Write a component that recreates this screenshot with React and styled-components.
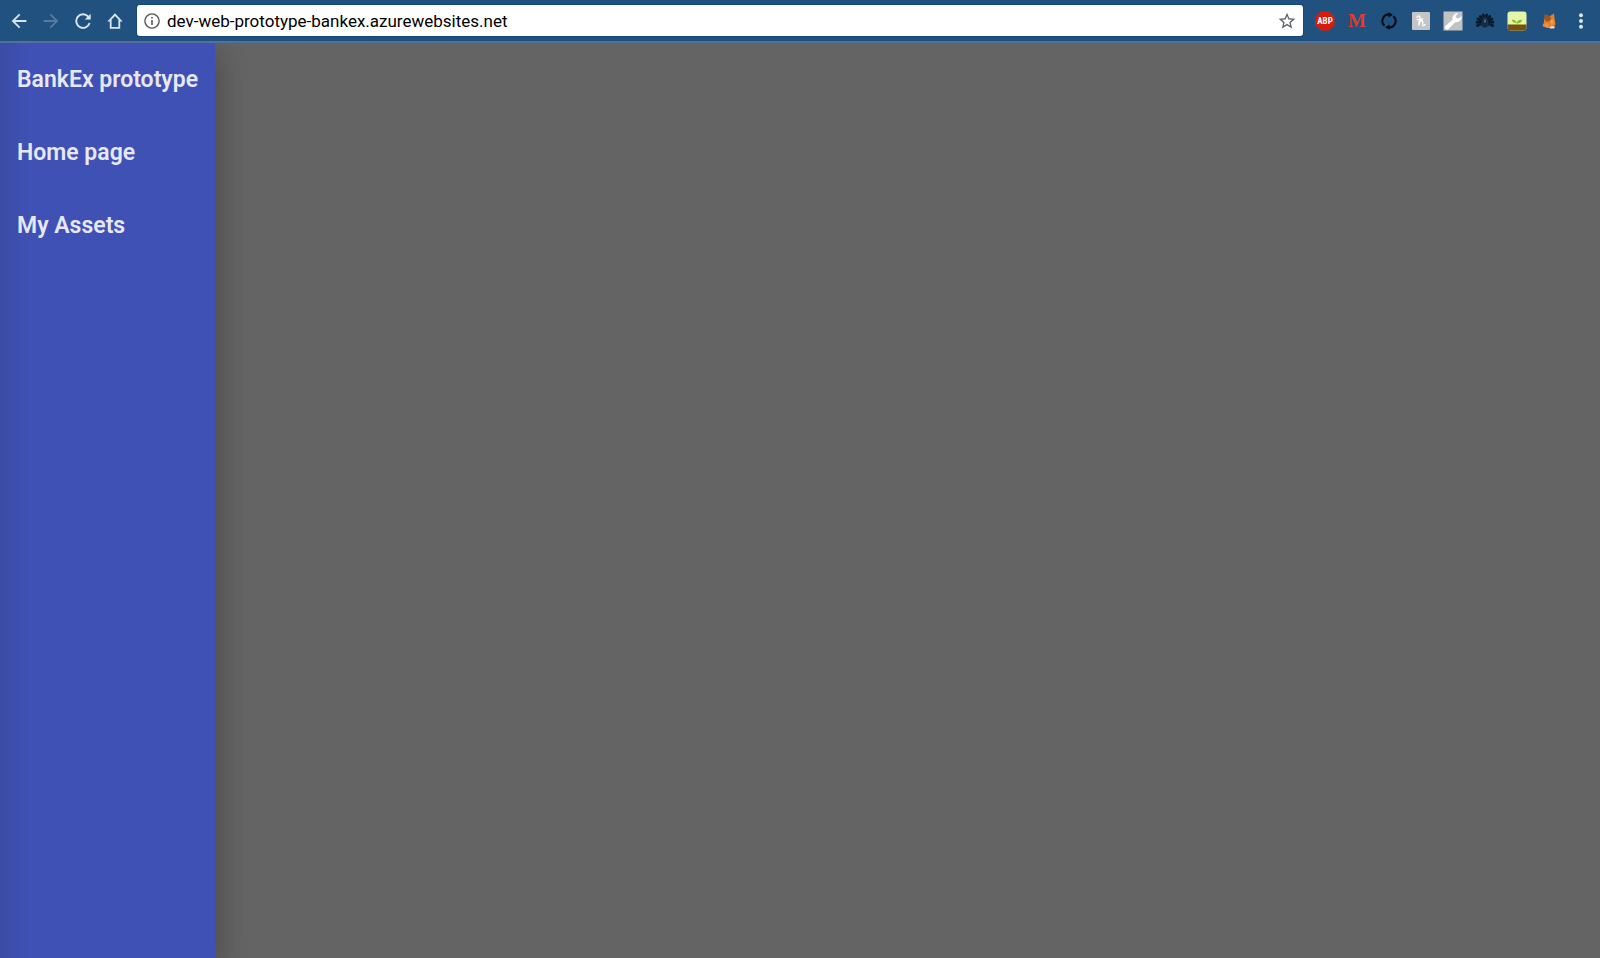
import React, { useState } from "react";
import styled, { createGlobalStyle } from "styled-components";

const GlobalStyle = createGlobalStyle`
  * {
    box-sizing: border-box;
  }
  body {
    margin: 0;
    background-color: #646464;
    font-family: Roboto, "Liberation Sans", sans-serif;
  }
`;

const Page = styled.div`
  display: flex;
  flex-direction: column;
  min-height: 100vh;
`;

const Toolbar = styled.header`
  display: flex;
  align-items: center;
  height: 43px;
  padding: 0 3px;
  background-color: #21527f;
  border-bottom: 2px solid #52709a;
  z-index: 1;
`;

const IconButton = styled.button`
  display: flex;
  align-items: center;
  justify-content: center;
  width: 32px;
  height: 32px;
  padding: 0;
  border: 0;
  background: none;
  color: ${({ disabled }) => (disabled ? "#557ca0" : "#dbe5ee")};
`;

const AddressBar = styled.div`
  display: flex;
  flex: 1;
  align-items: center;
  gap: 7px;
  height: 31px;
  margin: 0 6px;
  padding: 0 0 0 7px;
  border-radius: 3px;
  background-color: #fff;
  box-shadow: 0 0 0 1px #17477a;
`;

const AddressInput = styled.input`
  flex: 1;
  min-width: 0;
  padding: 0;
  border: 0;
  outline: 0;
  background: none;
  color: #000;
  font-family: Roboto, "Liberation Sans", sans-serif;
  font-size: 17px;
`;

const Extensions = styled.div`
  display: flex;
`;

const Content = styled.div`
  display: flex;
  flex: 1;
`;

const Drawer = styled.nav`
  display: flex;
  flex-direction: column;
  padding: 0 17px;
  background: linear-gradient(to right, #3c4ba6, #3f51b5 30px);
  box-shadow: 0 16px 24px 2px rgba(0, 0, 0, 0.14),
    0 6px 30px 5px rgba(0, 0, 0, 0.12);
`;

const DrawerLink = styled.a`
  color: #e6e8f6;
  font-size: 23px;
  font-weight: 600;
  line-height: 73px;
  text-decoration: none;
  white-space: nowrap;
`;

const Main = styled.main`
  flex: 1;
`;

const BackIcon = () => (
  <svg width="22" height="22" viewBox="0 0 24 24" fill="currentColor">
    <path d="M20 11H7.83l5.59-5.59L12 4l-8 8 8 8 1.41-1.41L7.83 13H20v-2z" />
  </svg>
);

const ForwardIcon = () => (
  <svg width="22" height="22" viewBox="0 0 24 24" fill="currentColor">
    <path d="M12 4l-1.41 1.41L16.17 11H4v2h12.17l-5.58 5.59L12 20l8-8z" />
  </svg>
);

const ReloadIcon = () => (
  <svg width="16" height="16" viewBox="0 0 16 16">
    <path
      d="M13.2 3.6A6.8 6.8 0 1 0 14.6 10"
      fill="none"
      stroke="currentColor"
      strokeWidth="1.9"
    />
    <path d="M15.7.7v5.9H9.8z" fill="currentColor" />
  </svg>
);

const HomeIcon = () => (
  <svg width="16" height="16" viewBox="0 0 16 16" fill="currentColor">
    <path
      fillRule="evenodd"
      d="M8 .3L.3 8.4h2.5v7.3h10.4V8.4h2.5zM8 2.9l3.4 3.6v7.4H4.6V6.5z"
    />
  </svg>
);

const InfoIcon = () => (
  <svg width="16" height="16" viewBox="0 0 16 16" fill="#555">
    <circle cx="8" cy="8" r="7.1" fill="none" stroke="#555" strokeWidth="1.4" />
    <path d="M7.2 7h1.6v5H7.2zM7.2 4h1.6v1.6H7.2z" />
  </svg>
);

const StarIcon = () => (
  <svg width="20" height="20" viewBox="0 0 24 24" fill="#5f6368">
    <path d="M22 9.24l-7.19-.62L12 2 9.19 8.63 2 9.24l5.46 4.73L5.82 21 12 17.27 18.18 21l-1.63-7.03L22 9.24zM12 15.4l-3.76 2.27 1-4.28-3.32-2.88 4.38-.38L12 6.1l1.71 4.04 4.38.38-3.32 2.88 1 4.28L12 15.4z" />
  </svg>
);

const AdblockIcon = () => (
  <svg width="20" height="20" viewBox="0 0 20 20">
    <path d="M6 .5h8L19.5 6v8L14 19.5H6L.5 14V6z" fill="#da1a0c" />
    <text
      x="10"
      y="13.2"
      fill="#fff"
      fontFamily="Roboto Condensed, Liberation Sans Narrow, Roboto, sans-serif"
      fontSize="9"
      fontWeight="700"
      textAnchor="middle"
    >
      ABP
    </text>
  </svg>
);

const MIcon = () => (
  <svg width="20" height="20" viewBox="0 0 20 20">
    <text
      x="10"
      y="16"
      fill="#dc3b34"
      fontFamily="Liberation Serif, serif"
      fontSize="19"
      fontWeight="700"
      textAnchor="middle"
    >
      M
    </text>
  </svg>
);

const SyncIcon = () => (
  <svg width="18" height="18" viewBox="0 0 18 18">
    <g fill="none" stroke="#0a0d12" strokeWidth="2.2">
      <path d="M4.5 13.8A6.6 6.6 0 0 1 9.500 2.400" />
      <path d="M13.500 4.200A6.600 6.600 0 0 1 8.500 15.600" />
    </g>
    <path d="M8.500.200l4.500 2.600-4.500 2.600zM9.500 17.800L5 15.200l4.500-2.600z" fill="#0a0d12" />
  </svg>
);

const HoneyIcon = () => (
  <svg width="18" height="18" viewBox="0 0 18 18">
    <rect width="18" height="18" rx="1" fill="#c3c5c7" />
    <path
      d="M5 5.400c.8-2 3-2 3 0 0 2-1.200 5-1.300 8.200.6-2.800 1.700-5 3.200-4.900 1.900.2-.2 4.400 1.200 4.900.8.200 1.500-.4 1.900-1.200M5.200 7.600c2 .2 4 0 5.600-.8"
      fill="none"
      stroke="#fff"
      strokeWidth="1.3"
      strokeLinecap="round"
    />
  </svg>
);

const WrenchIcon = () => (
  <svg width="20" height="20" viewBox="0 0 20 20">
    <rect x=".5" y=".5" width="19" height="19" fill="#c2c2c2" />
    <path
      d="M2 15.600L9.600 8.800C9 5 11.600 1.900 15.300 2.100L12.800 5l.6 2.300 2.500.3 2.700-2.500c.5 4-2.600 6.700-6.300 6.200L5 18.400C3 19.400 1 17.500 2 15.600z"
      fill="#fff"
    />
  </svg>
);

const feathers = [-108, -84, -60, -36, -12, 12, 36, 60, 84, 108];

const PeacockIcon = () => (
  <svg width="20" height="20" viewBox="0 0 20 20">
    {feathers.map((angle) => (
      <ellipse
        key={angle}
        cx="10"
        cy="5"
        rx="1.5"
        ry="2.6"
        fill="#0b1c2c"
        transform={`rotate(${angle} 10 12)`}
      />
    ))}
    <circle cx="10" cy="11.5" r="5" fill="#0b1c2c" />
    <path
      d="M10 6.500c-2 0-1.800 1.800-2.400 3.500-.9 2.500-1.300 5.500 2.400 7 3.700-1.500 3.300-4.500 2.400-7-.6-1.700-.4-3.500-2.400-3.500z"
      fill="#122b42"
      stroke="#24496a"
      strokeWidth=".6"
    />
    <path d="M9.300 8.500h1.400v3.200H9.300z" fill="#5f7f99" />
  </svg>
);

const PlantIcon = () => (
  <svg width="20" height="20" viewBox="0 0 20 20">
    <rect x=".5" y=".5" width="19" height="19" rx="3" fill="#e2f7a8" />
    <path d="M.5 13.500h19v3a3 3 0 0 1-3 3h-13a3 3 0 0 1-3-3z" fill="#7b500e" />
    <path
      d="M10 13.500c0-3-1.500-4.500-5.200-5 .3 2.800 2.500 3.600 5.200 3.300.2-2 2-3.300 5.200-3.100-.5 2.500-2.300 3.500-4.500 3.500v1.300z"
      fill="#83bd27"
    />
  </svg>
);

const FoxIcon = () => (
  <svg width="16" height="16" viewBox="0 0 16 16">
    <path d="M3 5l6-2 4-2.500.5 5L14.500 11l-1.500 4H6L1.500 13 3 9z" fill="#e0802c" />
    <path d="M3.500 1.500L7 2l3 2.500L9 8 5.500 8.500 3 6z" fill="#98562b" />
    <path d="M9 8l3-2.500 1 4.500-3 2z" fill="#f09a3a" />
    <path d="M1.500 12.500l4-2.500 3 2L7 15z" fill="#e59245" />
    <path d="M8.500 14l3-1.200L14 14.500l-1 1H9z" fill="#e8d8cc" />
  </svg>
);

const MenuIcon = () => (
  <svg width="6" height="18" viewBox="0 0 6 18" fill="currentColor">
    <circle cx="3" cy="3.3" r="2" />
    <circle cx="3" cy="9" r="2" />
    <circle cx="3" cy="14.700" r="2" />
  </svg>
);

const extensions = [
  { name: "Adblock Plus", Icon: AdblockIcon },
  { name: "M", Icon: MIcon },
  { name: "Sync", Icon: SyncIcon },
  { name: "Honey", Icon: HoneyIcon },
  { name: "Tools", Icon: WrenchIcon },
  { name: "Peacock", Icon: PeacockIcon },
  { name: "Plant", Icon: PlantIcon },
  { name: "MetaMask", Icon: FoxIcon },
  { name: "Menu", Icon: MenuIcon },
];

const links = ["BankEx prototype", "Home page", "My Assets"];

const App = () => {
  const [url, setUrl] = useState("dev-web-prototype-bankex.azurewebsites.net");

  return (
    <Page>
      <GlobalStyle />
      <Toolbar>
        <IconButton aria-label="Back">
          <BackIcon />
        </IconButton>
        <IconButton aria-label="Forward" disabled>
          <ForwardIcon />
        </IconButton>
        <IconButton aria-label="Reload">
          <ReloadIcon />
        </IconButton>
        <IconButton aria-label="Home">
          <HomeIcon />
        </IconButton>
        <AddressBar>
          <InfoIcon />
          <AddressInput
            aria-label="Address"
            value={url}
            onChange={(event) => setUrl(event.target.value)}
          />
          <IconButton aria-label="Bookmark this page">
            <StarIcon />
          </IconButton>
        </AddressBar>
        <Extensions>
          {extensions.map(({ name, Icon }) => (
            <IconButton key={name} aria-label={name}>
              <Icon />
            </IconButton>
          ))}
        </Extensions>
      </Toolbar>
      <Content>
        <Drawer>
          {links.map((link) => (
            <DrawerLink key={link} href="#">
              {link}
            </DrawerLink>
          ))}
        </Drawer>
        <Main />
      </Content>
    </Page>
  );
};

export default App;
